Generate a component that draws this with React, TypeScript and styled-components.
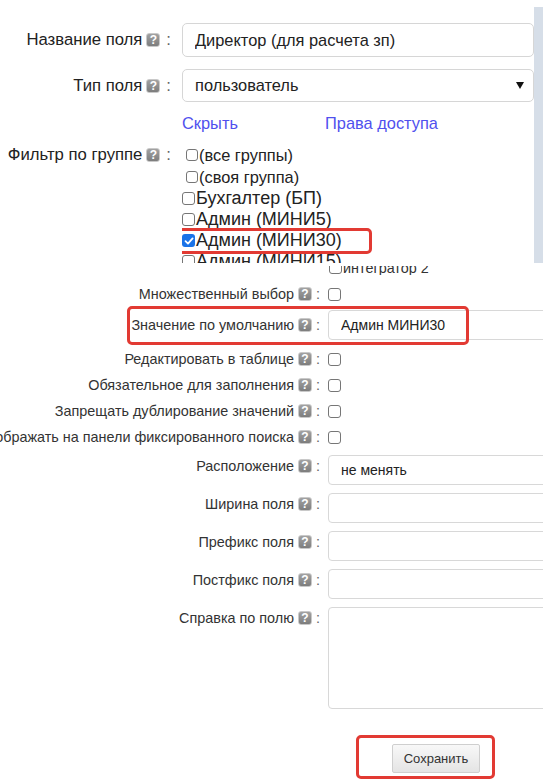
import React from 'react';
import styled, { createGlobalStyle } from 'styled-components';

const GlobalStyle = createGlobalStyle`
  html, body {
    margin: 0;
    padding: 0;
    background: #fff;
  }
  body {
    font-family: "Liberation Sans", Arial, sans-serif;
    overflow: hidden;
  }
`;

const Page = styled.div`
  width: 543px;
  height: 782px;
  overflow: hidden;
`;

/* ---------- top part ---------- */

const TopPanel = styled.div`
  display: flex;
  height: 263px;
  overflow: hidden;
`;

const TopForm = styled.div`
  flex: 1;
  min-width: 0;
  padding-top: 23px;
  font-size: 16.4px;
  color: #222;
`;

const SideStrip = styled.div`
  flex: 0 0 9px;
  margin-top: 7px;
  background: #d6dee8;
`;

const TopRow = styled.div<{ $height: number; $gap?: number; $top?: boolean }>`
  display: flex;
  align-items: ${p => (p.$top ? 'flex-start' : 'center')};
  height: ${p => p.$height}px;
  margin-top: ${p => p.$gap ?? 0}px;
`;

const TopLabel = styled.div`
  flex: 0 0 171px;
  min-width: 0;
  display: flex;
  justify-content: flex-end;
  align-items: center;
  white-space: nowrap;
  font-size: 16.7px;
  line-height: 22px;
`;

const TopControl = styled.div`
  flex: 1;
  min-width: 0;
  margin-left: 11px;
  height: 100%;
`;

const HelpIcon = styled.span<{ $size: number }>`
  display: inline-flex;
  flex: 0 0 auto;
  align-items: center;
  justify-content: center;
  box-sizing: border-box;
  width: ${p => p.$size}px;
  height: ${p => p.$size}px;
  margin-left: 4px;
  border: 1px solid #c9c9c9;
  border-radius: 3px;
  background: linear-gradient(#a2a2a2, #7d7d7d);
  color: #fff;
  font-family: "Liberation Sans", Arial, sans-serif;
  font-size: ${p => p.$size - 2}px;
  font-weight: bold;
  line-height: 1;
`;

const Colon = styled.span<{ $space: number }>`
  margin-left: ${p => p.$space}px;
  color: #666;
`;

const TextBox = styled.input`
  box-sizing: border-box;
  width: 100%;
  height: 100%;
  padding: 0 12px;
  border: 1px solid #d6d6d6;
  border-radius: 5px;
  background: #fff;
  color: #222;
  font: inherit;
  outline: none;
`;

const SelectBox = styled.div`
  box-sizing: border-box;
  display: flex;
  align-items: center;
  justify-content: space-between;
  height: 100%;
  padding: 0 9px 0 12px;
  border: 1px solid #d6d6d6;
  border-radius: 5px;
`;

const Caret = styled.span`
  width: 0;
  height: 0;
  border-left: 4px solid transparent;
  border-right: 4px solid transparent;
  border-top: 7px solid #111;
`;

const LinkRow = styled.div`
  display: grid;
  grid-template-columns: 143px auto;
  margin-top: 11px;
  padding-left: 182px;
  line-height: 20px;
`;

const Link = styled.a`
  color: #5050ee;
  text-decoration: none;
  cursor: pointer;
`;

const GroupList = styled.div`
  height: 120px;
  overflow: hidden;
`;

const GroupItem = styled.div<{ $big?: boolean }>`
  position: relative;
  display: flex;
  align-items: center;
  height: ${p => (p.$big ? 21 : 22)}px;
  padding-left: ${p => (p.$big ? 0 : 4)}px;
  font-size: ${p => (p.$big ? 18 : 16.4)}px;
  color: #222;
  white-space: nowrap;
`;

const Check = styled.span<{ $size: number; $checked?: boolean }>`
  box-sizing: border-box;
  flex: 0 0 auto;
  display: inline-flex;
  align-items: center;
  justify-content: center;
  width: ${p => p.$size}px;
  height: ${p => p.$size}px;
  margin-right: 1px;
  border: ${p => (p.$checked ? 'none' : '1.3px solid #767676')};
  border-radius: 3px;
  background: ${p => (p.$checked ? '#1a73e8' : '#fff')};
`;

const Highlight = styled.div<{ $l: number; $t: number; $w: number; $h: number }>`
  position: absolute;
  left: ${p => p.$l}px;
  top: ${p => p.$t}px;
  width: ${p => p.$w}px;
  height: ${p => p.$h}px;
  box-sizing: border-box;
  border: 3px solid #e23a33;
  border-radius: 5px;
  pointer-events: none;
`;

/* ---------- bottom part ---------- */

const BottomForm = styled.div`
  font-size: 14.4px;
  color: #333;
`;

const ClipRow = styled.div`
  height: 9px;
  margin-top: 3px;
  overflow: hidden;
`;

const ClipInner = styled.div`
  display: flex;
  align-items: center;
  height: 21px;
  margin-top: -9px;
  padding-left: 329px;
  white-space: nowrap;
`;

const Row = styled.div<{ $height?: number; $gap?: number; $top?: boolean }>`
  position: relative;
  display: flex;
  align-items: ${p => (p.$top ? 'flex-start' : 'center')};
  height: ${p => (p.$height ? `${p.$height}px` : 'auto')};
  margin-top: ${p => p.$gap ?? 0}px;
`;

const Label = styled.div`
  flex: 0 0 320px;
  min-width: 0;
  display: flex;
  justify-content: flex-end;
  align-items: center;
  white-space: nowrap;
  line-height: 22px;
`;

const Control = styled.div`
  flex: 0 0 240px;
  margin-left: 8px;
  height: 100%;
  display: flex;
  align-items: center;
`;

const Field = styled.input`
  box-sizing: border-box;
  width: 100%;
  height: 100%;
  padding: 0 12px;
  border: 1px solid #d8d8d8;
  border-radius: 4px;
  background: #fff;
  color: #222;
  font: inherit;
  font-size: 14px;
  outline: none;
`;

const Area = styled.textarea`
  box-sizing: border-box;
  width: 100%;
  height: 102px;
  border: 1px solid #d8d8d8;
  border-radius: 4px;
  resize: none;
  outline: none;
`;

const ButtonRow = styled.div`
  position: relative;
  margin-top: 35px;
  margin-left: 392px;
  width: 88px;
`;

const SaveButton = styled.button`
  box-sizing: border-box;
  width: 88px;
  height: 29px;
  border: 1px solid #cfcfcf;
  border-radius: 2px;
  background: linear-gradient(#f8f8f8, #e4e4e4);
  color: #333;
  font-family: "Liberation Sans", Arial, sans-serif;
  font-size: 13px;
  cursor: pointer;
`;

const Tick = () => (
  <svg width="10" height="10" viewBox="0 0 10 10">
    <path d="M1.5 5.2 L4 7.6 L8.6 2.4" fill="none" stroke="#fff" strokeWidth="1.8" strokeLinecap="round" strokeLinejoin="round" />
  </svg>
);

const TopFieldLabel: React.FC<{ text: string }> = ({ text }) => (
  <TopLabel>
    {text}
    <HelpIcon $size={14}>?</HelpIcon>
    <Colon $space={6}>:</Colon>
  </TopLabel>
);

const FieldLabel: React.FC<{ text: string }> = ({ text }) => (
  <Label>
    {text}
    <HelpIcon $size={14}>?</HelpIcon>
    <Colon $space={4}>:</Colon>
  </Label>
);

const groups = [
  { name: '(все группы)' },
  { name: '(своя группа)' },
  { name: 'Бухгалтер (БП)', big: true },
  { name: 'Админ (МИНИ5)', big: true },
  { name: 'Админ (МИНИ30)', big: true, checked: true },
  { name: 'Админ (МИНИ15)', big: true },
];

const checkRows = [
  'Редактировать в таблице',
  'Обязательное для заполнения',
  'Запрещать дублирование значений',
  'Отображать на панели фиксированного поиска',
];

const inputRows = [
  { label: 'Расположение', value: 'не менять' },
  { label: 'Ширина поля', value: '' },
  { label: 'Префикс поля', value: '' },
  { label: 'Постфикс поля', value: '' },
];

export default function App() {
  return (
    <Page>
      <GlobalStyle />
      <TopPanel>
        <TopForm>
          <TopRow $height={34}>
            <TopFieldLabel text="Название поля" />
            <TopControl>
              <TextBox readOnly value="Директор (для расчета зп)" />
            </TopControl>
          </TopRow>
          <TopRow $height={33} $gap={12}>
            <TopFieldLabel text="Тип поля" />
            <TopControl>
              <SelectBox>
                пользователь
                <Caret />
              </SelectBox>
            </TopControl>
          </TopRow>
          <LinkRow>
            <Link>Скрыть</Link>
            <Link>Права доступа</Link>
          </LinkRow>
          <TopRow $height={120} $gap={11} $top>
            <TopFieldLabel text="Фильтр по группе" />
            <TopControl>
              <GroupList>
                {groups.map(g => (
                  <GroupItem key={g.name} $big={g.big}>
                    <Check $size={g.big ? 13 : 12} $checked={g.checked}>
                      {g.checked && <Tick />}
                    </Check>
                    {g.name}
                    {g.checked && <Highlight $l={-10} $t={-2} $w={200} $h={26} />}
                  </GroupItem>
                ))}
              </GroupList>
            </TopControl>
          </TopRow>
        </TopForm>
        <SideStrip />
      </TopPanel>

      <BottomForm>
        <ClipRow>
          <ClipInner>
            <Check $size={13} />
            интегратор 2
          </ClipInner>
        </ClipRow>

        <Row $height={26} $gap={6}>
          <FieldLabel text="Множественный выбор" />
          <Control>
            <Check $size={13} />
          </Control>
        </Row>

        <Row $height={30} $gap={3}>
          <FieldLabel text="Значение по умолчанию" />
          <Control>
            <Field readOnly value="Админ МИНИ30" />
          </Control>
          <Highlight $l={127} $t={-4} $w={342} $h={39} />
        </Row>

        {checkRows.map((text, i) => (
          <Row key={text} $height={26} $gap={i === 0 ? 6 : 0}>
            <FieldLabel text={text} />
            <Control>
              <Check $size={13} />
            </Control>
          </Row>
        ))}

        {inputRows.map((r, i) => (
          <Row key={r.label} $height={30} $gap={i === 0 ? 5 : 8} $top>
            <FieldLabel text={r.label} />
            <Control>
              <Field readOnly value={r.value} />
            </Control>
          </Row>
        ))}

        <Row $gap={8} $top>
          <FieldLabel text="Справка по полю" />
          <Control>
            <Area readOnly />
          </Control>
        </Row>

        <ButtonRow>
          <SaveButton>Сохранить</SaveButton>
          <Highlight $l={-36} $t={-9} $w={139} $h={44} />
        </ButtonRow>
      </BottomForm>
    </Page>
  );
}
